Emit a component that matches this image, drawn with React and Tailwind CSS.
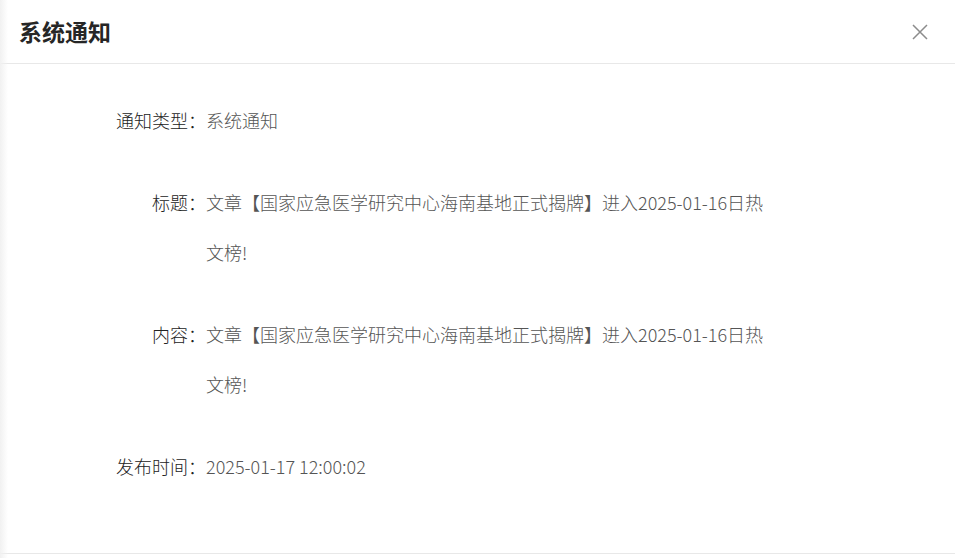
import React from "react";

const rows = [
  { label: "通知类型：", value: "系统通知" },
  { label: "标题：", value: "文章【国家应急医学研究中心海南基地正式揭牌】进入2025-01-16日热文榜!" },
  { label: "内容：", value: "文章【国家应急医学研究中心海南基地正式揭牌】进入2025-01-16日热文榜!" },
  { label: "发布时间：", value: "2025-01-17 12:00:02" },
];

export default function App() {
  return (
    <div
      className="relative w-[955px] h-[558px] bg-white overflow-hidden"
      style={{ fontFamily: '"Noto Sans CJK SC", "Noto Sans", sans-serif' }}
    >
      <div className="pointer-events-none absolute left-0 top-0 h-full w-[8px] bg-gradient-to-r from-[#f1f1f1] to-[#ffffff00]" />
      <div className="flex h-[64px] items-center justify-between border-b border-[#e8e8e8] pl-[19px] pr-[26px]">
        <h1 className="text-[23px] font-bold text-[#262626] leading-none -mt-[1px]">系统通知</h1>
        <svg width="18" height="18" viewBox="0 0 18 18" className="text-[#8c8c8c]">
          <path d="M2 2 L16 16 M16 2 L2 16" stroke="currentColor" strokeWidth="1.5" fill="none" />
        </svg>
      </div>
      <div className="h-[490px] border-b border-[#e8e8e8] pt-[31px]">
        {rows.map((r) => (
          <div key={r.label} className="mb-[32px] flex text-[18px] leading-[50px] font-light">
            <div className="w-[206px] shrink-0 text-right text-[#222222]">{r.label}</div>
            <div className="w-[566px] text-[#555555]">{r.value}</div>
          </div>
        ))}
      </div>
    </div>
  );
}
